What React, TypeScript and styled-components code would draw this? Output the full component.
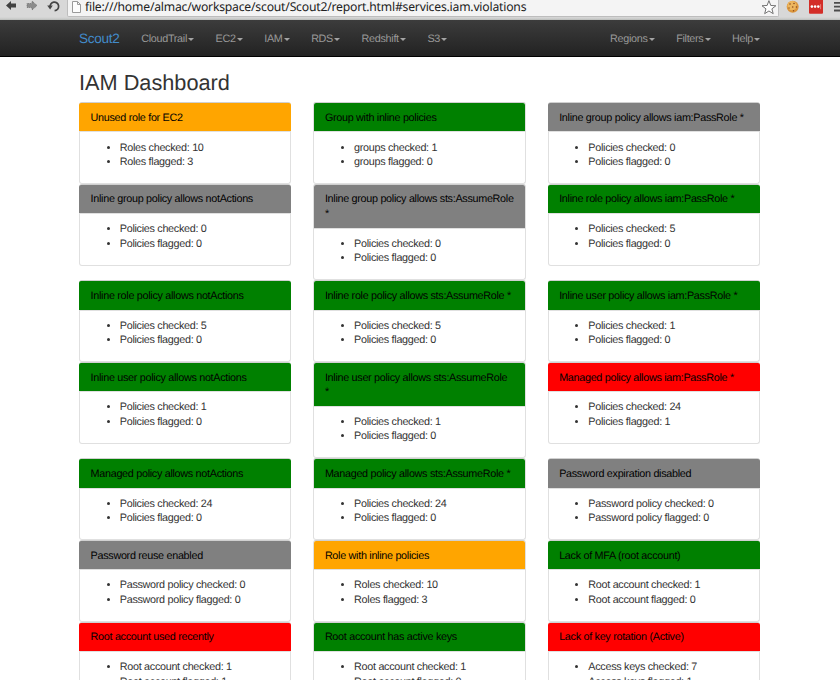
import React from "react";
import styled, { createGlobalStyle } from "styled-components";

const GlobalStyle = createGlobalStyle`
  * { box-sizing: border-box; }
  body {
    margin: 0;
    background: #fff;
    color: #333;
    font: 10.8px/14.48px "Liberation Sans", Arial, sans-serif;
    letter-spacing: -0.3px;
    text-rendering: geometricPrecision;
  }
`;

const Page = styled.div`
  width: 840px;
  height: 680px;
  overflow: hidden;
`;

const BrowserBar = styled.header`
  display: flex;
  height: 20px;
  background: linear-gradient(#d8d8d8 0 17px, #c9cac9 19px, #b5b8b5 20px);
`;

const NavIcons = styled.svg`
  flex: none;
  width: 67px;
  height: 17px;
`;

const AddressField = styled.div`
  display: flex;
  flex: none;
  width: 712px;
  height: 17px;
  padding: 0 0 0 3px;
  background: #f4f4f4;
  border: solid #bdbdbd;
  border-width: 0 1px 1px;
  border-radius: 0 0 2px 2px;
`;

const FileIcon = styled.svg`
  width: 11px;
  height: 15px;
  margin-right: 3px;
`;

const Url = styled.span`
  flex: 1;
  font: 12.2px/14px "Noto Sans", sans-serif;
  letter-spacing: -0.21px;
  white-space: nowrap;
  color: #222;
`;

const StarIcon = styled.svg`
  width: 16px;
  height: 16px;
`;

const Extensions = styled.svg`
  width: 61px;
  height: 17px;
`;

const Navbar = styled.nav`
  height: 37px;
  padding: 2px 0 0 79px;
  background: linear-gradient(#3c3c3c, #222);
  border-bottom: 1px solid #000;
  display: flex;
`;

const NavInner = styled.div`
  display: flex;
  align-items: center;
  width: 681px;
`;

const Brand = styled.a`
  margin-right: 11px;
  font-size: 13.6px;
  color: #428bca;
`;

const Menu = styled.ul<{ $right?: boolean }>`
  display: flex;
  margin: 0;
  margin-left: ${(p) => (p.$right ? "auto" : "0")};
  margin-right: ${(p) => (p.$right ? "-10.9px" : "0")};
  padding: 0;
  list-style: none;
`;

const MenuItem = styled.li`
  display: flex;
  align-items: center;
  padding: 0 10.7px;
  color: #999;
`;

const Caret = styled.svg`
  width: 6px;
  height: 3px;
  margin: 1px 0 0 1.2px;
  fill: #a4a4a4;
`;

const Main = styled.main`
  width: 681px;
  margin-left: 79px;
`;

const Title = styled.h1`
  margin: 0;
  padding: 14px 0 7.2px;
  font-size: 21.72px;
  line-height: 24px;
  font-weight: 500;
  letter-spacing: 0;
`;

const PanelGrid = styled.div`
  display: grid;
  grid-template-columns: repeat(3, 212.4px);
  column-gap: 21.9px;
  align-items: start;
`;

const Panel = styled.section`
  border: 1px solid #e0e0e0;
  border-top-color: #d0d0d0;
  border-radius: 3px;
`;

const Heading = styled.h2<{ $status: Status }>`
  margin: 0 -0.6px;
  padding: 7.5px 9px 6.3px 11.2px;
  border-bottom: 1px solid #e0e0e0;
  border-radius: 2px 2px 0 0;
  background: ${(p) => p.$status};
  color: #000;
  font-size: inherit;
  font-weight: 400;
  white-space: pre-line;
`;

const Counts = styled.ul`
  margin: 0;
  padding: 8.1px 10.6px 0 39.8px;
  height: 50.5px;
`;

type Status = "orange" | "green" | "gray" | "red";
type Finding = [status: Status, title: string, subject: string, checked: number, flagged: number];

const services = ["CloudTrail", "EC2", "IAM", "RDS", "Redshift", "S3"];
const tools = ["Regions", "Filters", "Help"];

const findings: Finding[] = [
  ["orange", "Unused role for EC2", "Roles", 10, 3],
  ["green", "Group with inline policies", "groups", 1, 0],
  ["gray", "Inline group policy allows iam:PassRole *", "Policies", 0, 0],
  ["gray", "Inline group policy allows notActions", "Policies", 0, 0],
  ["gray", "Inline group policy allows sts:AssumeRole\n*", "Policies", 0, 0],
  ["green", "Inline role policy allows iam:PassRole *", "Policies", 5, 0],
  ["green", "Inline role policy allows notActions", "Policies", 5, 0],
  ["green", "Inline role policy allows sts:AssumeRole *", "Policies", 5, 0],
  ["green", "Inline user policy allows iam:PassRole *", "Policies", 1, 0],
  ["green", "Inline user policy allows notActions", "Policies", 1, 0],
  ["green", "Inline user policy allows sts:AssumeRole\n*", "Policies", 1, 0],
  ["red", "Managed policy allows iam:PassRole *", "Policies", 24, 1],
  ["green", "Managed policy allows notActions", "Policies", 24, 0],
  ["green", "Managed policy allows sts:AssumeRole *", "Policies", 24, 0],
  ["gray", "Password expiration disabled", "Password policy", 0, 0],
  ["gray", "Password reuse enabled", "Password policy", 0, 0],
  ["orange", "Role with inline policies", "Roles", 10, 3],
  ["green", "Lack of MFA (root account)", "Root account", 1, 0],
  ["red", "Root account used recently", "Root account", 1, 1],
  ["green", "Root account has active keys", "Root account", 1, 0],
  ["red", "Lack of key rotation (Active)", "Access keys", 7, 1],
];

function MenuList({ items, right }: { items: string[]; right?: boolean }) {
  return (
    <Menu $right={right}>
      {items.map((item) => (
        <MenuItem key={item}>
          {item}
          <Caret viewBox="0 0 6 3">
            <path d="M0 0h6L3 3Z" />
          </Caret>
        </MenuItem>
      ))}
    </Menu>
  );
}

function Browser() {
  return (
    <BrowserBar>
      <NavIcons viewBox="0 0 67 17">
        <path d="M6 5.5 11 1v2.5h5v4h-5V10Z" fill="#414141" />
        <path d="M37 5.5 32 1v2.5h-5v4h5V10Z" fill="#8c8c8c" stroke="#666" strokeWidth=".8" strokeDasharray="1 1" />
        <path d="M50.1 7.2A4.3 4.3 0 1 1 54.6 10.7" fill="none" stroke="#444" strokeWidth="1.7" />
        <path d="M47.2 5.6h5.6l-2.7 3.8Z" fill="#444" />
      </NavIcons>
      <AddressField>
        <FileIcon viewBox="0 0 11 15">
          <path d="M1.5 1.5h5l3 3v8h-8Z" fill="#fdfdfd" stroke="#9a9a9a" />
          <path d="M6.5 1.5v3h3" fill="none" stroke="#9a9a9a" />
        </FileIcon>
        <Url>file:///home/almac/workspace/scout/Scout2/report.html#services.iam.violations</Url>
        <StarIcon viewBox="0 0 15 15">
          <path d="m6.5.6 1.7 4.5 4.8.3-3.7 2.9 1.2 4.5-4-2.5-4 2.5 1.2-4.5L0 5.4l4.8-.3Z" fill="#fff" stroke="#6d6d6d" strokeWidth=".9" />
        </StarIcon>
      </AddressField>
      <Extensions viewBox="779 0 61 17">
        <circle cx="792.7" cy="6.8" r="6" fill="#dc963c" />
        <circle cx="792" cy="5.7" r="4.6" fill="#edb75f" />
        <g fill="#8c4b1c">
          <circle cx="790" cy="4" r=".8" />
          <circle cx="794" cy="3.5" r=".8" />
          <circle cx="792.7" cy="7" r=".8" />
          <circle cx="789" cy="8" r=".7" />
          <circle cx="796.4" cy="7" r=".8" />
          <circle cx="793.5" cy="10.7" r=".7" />
        </g>
        <rect x="809" y="-1" width="14" height="14.7" rx="1" fill="#d32d27" />
        <g fill="#fff">
          <circle cx="811.9" cy="6.6" r="1.3" />
          <circle cx="815.1" cy="6.6" r="1.3" />
          <circle cx="818.3" cy="6.6" r="1.3" />
        </g>
        <path d="M820.6 4.2v5" stroke="#f0a09c" strokeWidth=".7" />
        <path d="M834 2.9h6M834 6.7h6M834 10.5h6" stroke="#4b4b4b" strokeWidth="1.8" />
      </Extensions>
    </BrowserBar>
  );
}

export default function App() {
  return (
    <Page>
      <GlobalStyle />
      <Browser />
      <Navbar>
        <NavInner>
          <Brand>Scout2</Brand>
          <MenuList items={services} />
          <MenuList items={tools} right />
        </NavInner>
      </Navbar>
      <Main>
        <Title>IAM Dashboard</Title>
        <PanelGrid>
          {findings.map(([status, title, subject, checked, flagged]) => (
            <Panel key={title}>
              <Heading $status={status}>{title}</Heading>
              <Counts>
                <li>{subject} checked: {checked}</li>
                <li>{subject} flagged: {flagged}</li>
              </Counts>
            </Panel>
          ))}
        </PanelGrid>
      </Main>
    </Page>
  );
}
